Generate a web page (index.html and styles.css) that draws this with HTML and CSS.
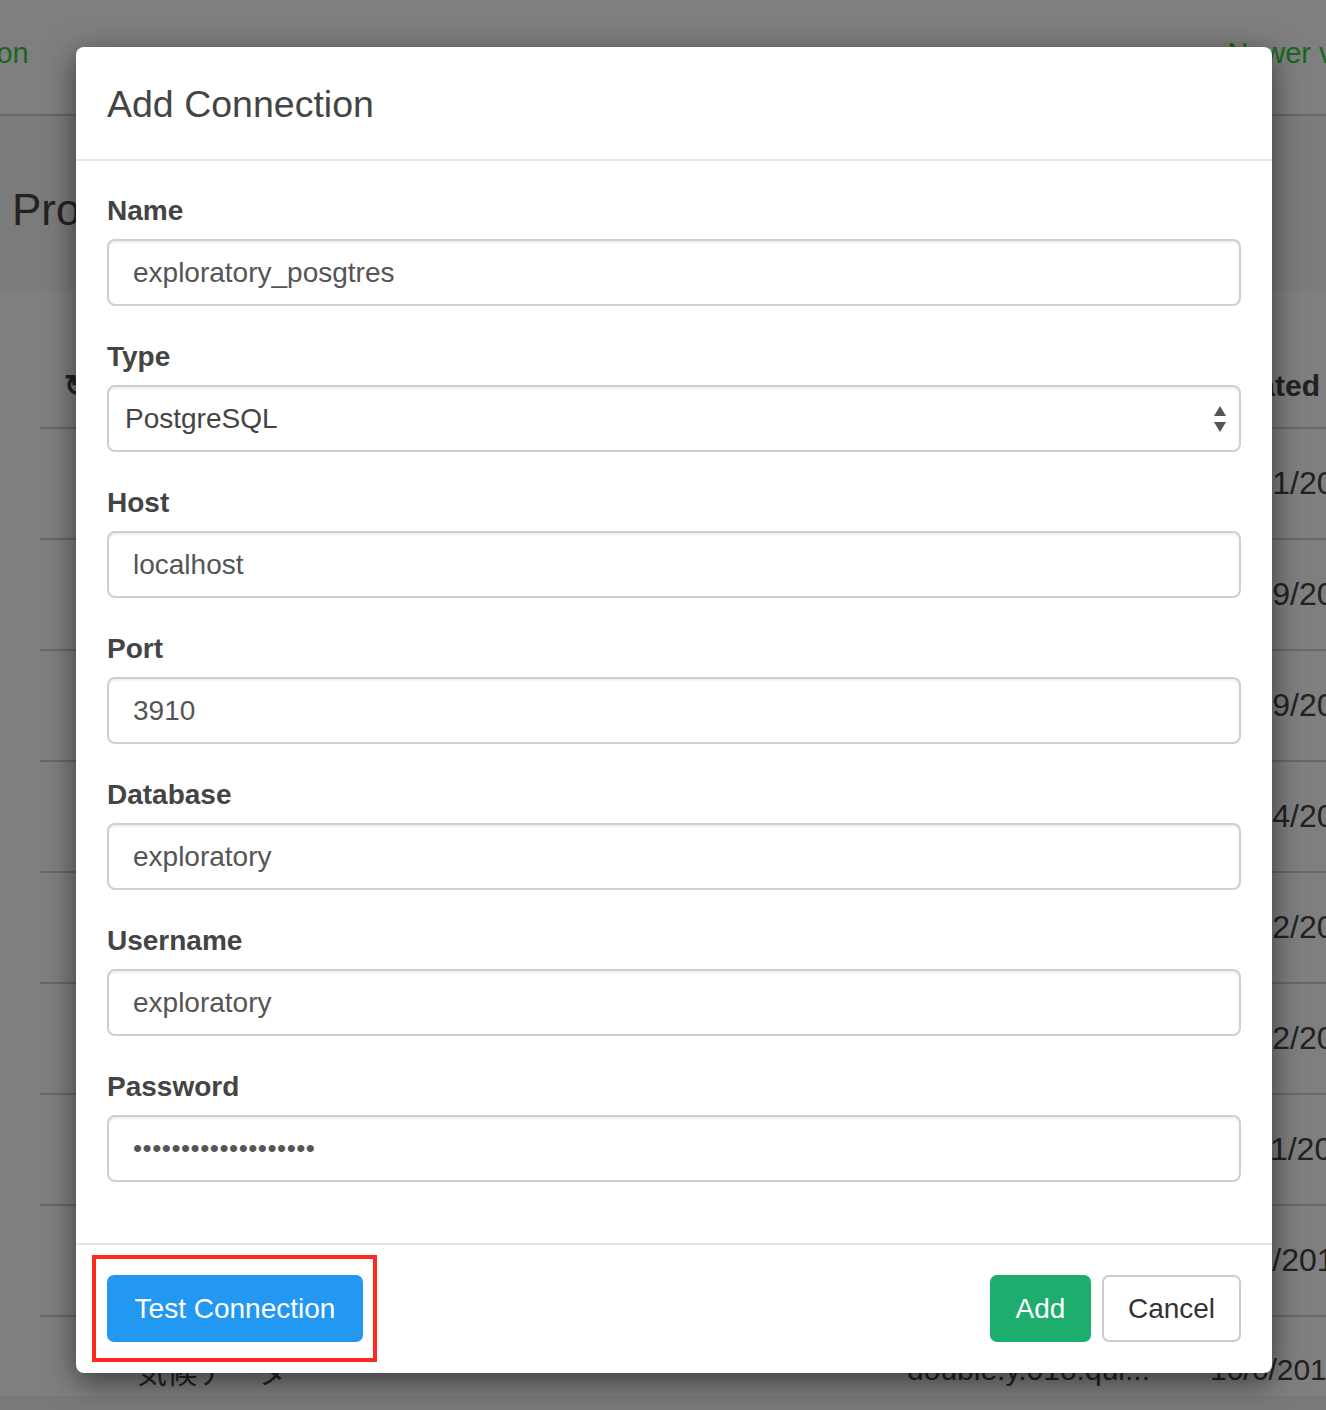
FILE: index.html
```html
<!DOCTYPE html>
<html>
<head>
<meta charset="utf-8">
<link rel="stylesheet" href="styles.css">
</head>
<body>
<div class="page">
  <header class="topnav">
    <span class="brand">Connection</span>
    <span class="newer">Newer version is available</span>
  </header>
  <section class="hero"><h1 class="hero-title">Projects</h1></section>
  <div class="list">
    <div class="row head"><span class="icon">&#x21BB;</span><span class="date">Updated</span></div>
    <div class="row"><span class="date">10/21/2016</span></div>
    <div class="row"><span class="date">10/19/2016</span></div>
    <div class="row"><span class="date">10/19/2016</span></div>
    <div class="row"><span class="date">10/14/2016</span></div>
    <div class="row"><span class="date">10/12/2016</span></div>
    <div class="row"><span class="date">10/12/2016</span></div>
    <div class="row"><span class="date">10/11/2016</span></div>
    <div class="row"><span class="date">10/7/2016</span></div>
    <div class="row last"><span class="name">気候データ</span><span class="file">double.y.01o.qui...</span><span class="date">10/6/2016</span></div>
  </div>
  <div class="pagefoot"></div>
</div>
<div class="backdrop"></div>
<div class="modal">
  <div class="modal-header"><h4 class="modal-title">Add Connection</h4></div>
  <div class="modal-body">
    <div class="group">
      <label class="label">Name</label>
      <input class="control" type="text" value="exploratory_posgtres">
    </div>
    <div class="group">
      <label class="label">Type</label>
      <div class="control select">
        <span>PostgreSQL</span>
        <svg class="arrows" width="14" height="26" viewBox="0 0 14 26"><path d="M7 0 L13 10 L1 10 Z" fill="#555"/><path d="M1 16 L13 16 L7 26 Z" fill="#555"/></svg>
      </div>
    </div>
    <div class="group">
      <label class="label">Host</label>
      <input class="control" type="text" value="localhost">
    </div>
    <div class="group">
      <label class="label">Port</label>
      <input class="control" type="text" value="3910">
    </div>
    <div class="group">
      <label class="label">Database</label>
      <input class="control" type="text" value="exploratory">
    </div>
    <div class="group">
      <label class="label">Username</label>
      <input class="control" type="text" value="exploratory">
    </div>
    <div class="group">
      <label class="label">Password</label>
      <input class="control pw" type="password" value="abcdefghijklmnopqrs">
    </div>
  </div>
  <div class="modal-footer">
    <span class="highlight"><button class="btn btn-blue">Test Connection</button></span>
    <span class="spacer"></span>
    <button class="btn btn-green">Add</button>
    <button class="btn btn-default">Cancel</button>
  </div>
</div>
</body>
</html>
```

FILE: styles.css
```css
html, body {
  margin: 0;
  padding: 0;
}
body {
  font-family: "Liberation Sans", Arial, sans-serif;
  width: 1326px;
  height: 1410px;
  overflow: hidden;
  background: #ffffff;
  position: relative;
}
.page {
  width: 1326px;
}
.topnav {
  height: 116px;
  border-bottom: 2px solid #cfcfcf;
  display: flex;
  justify-content: space-between;
  align-items: center;
  white-space: nowrap;
  overflow: hidden;
  font-size: 29px;
  color: #34d234;
  padding-bottom: 8px;
  box-sizing: border-box;
}
.brand {
  margin-left: -118px;
}
.newer {
  margin-right: -238px;
}
.hero {
  height: 174px;
  background: #f6f6f6;
  display: flex;
  align-items: center;
  padding-left: 12px;
}
.hero-title {
  margin: 0;
  font-weight: normal;
  font-size: 44px;
  color: #444;
  padding-top: 14px;
}
.list {
  padding-left: 40px;
}
.row {
  height: 109px;
  border-bottom: 2px solid #d0d0d0;
  display: flex;
  align-items: center;
  font-size: 32px;
  color: #444;
}
.row .date {
  margin-left: auto;
  width: 116px;
  white-space: nowrap;
}
.row.head {
  height: 139px;
  align-items: flex-end;
  padding-bottom: 24px;
  box-sizing: border-box;
  font-weight: bold;
  font-size: 30px;
}
.row.head .icon {
  margin-left: 24px;
  font-size: 30px;
}
.row.head .date {
  width: auto;
  margin-right: 6px;
}
.row.last {
  border-bottom: none;
  height: 79px;
  align-items: flex-start;
  padding-top: 38px;
  box-sizing: border-box;
  overflow: hidden;
  font-size: 30px;
}
.row .name {
  margin-left: 97px;
  font-family: "Noto Sans CJK JP", sans-serif;
  line-height: 1;
}
.row .file {
  margin-left: auto;
  margin-right: 60px;
  line-height: 1;
}
.row.last .date {
  margin-left: 0;
  line-height: 1;
}
.pagefoot {
  height: 40px;
  background: #f3f3f3;
}
.backdrop {
  position: absolute;
  inset: 0;
  background: rgba(0, 0, 0, 0.5);
}
.modal {
  position: absolute;
  left: 76px;
  top: 47px;
  width: 1196px;
  background: #fff;
  border-radius: 8px;
  box-shadow: 0 8px 30px rgba(0, 0, 0, 0.55);
  color: #333;
}
.modal-header {
  height: 114px;
  border-bottom: 2px solid #e5e5e5;
  display: flex;
  align-items: center;
  padding: 0 31px;
  box-sizing: border-box;
}
.modal-title {
  margin: 0;
  font-size: 37.5px;
  font-weight: normal;
  color: #444;
  padding-top: 2px;
}
.modal-body {
  padding: 34px 31px 61px;
}
.group {
  margin-bottom: 35px;
}
.group:last-child {
  margin-bottom: 0;
}
.label {
  display: block;
  font-size: 28px;
  line-height: 32px;
  font-weight: bold;
  color: #444;
  margin-bottom: 12px;
}
.control {
  display: flex;
  align-items: center;
  width: 100%;
  height: 67px;
  box-sizing: border-box;
  border: 2px solid #cfcfcf;
  border-radius: 8px;
  padding: 0 24px;
  font-family: "Liberation Sans", Arial, sans-serif;
  font-size: 28px;
  color: #555;
  background: #fff;
  box-shadow: inset 0 2px 2px rgba(0, 0, 0, 0.06);
  outline: none;
}
.pw {
  font-size: 26px;
  letter-spacing: 0.5px;
}
.select {
  padding: 0 12px 0 16px;
  justify-content: space-between;
  color: #444;
}
.arrows {
  display: block;
}
.modal-footer {
  border-top: 2px solid #e5e5e5;
  padding: 30px 31px 31px;
  display: flex;
  align-items: center;
  gap: 11px;
}
.spacer {
  flex: 1;
}
.highlight {
  display: inline-flex;
  border: 4px solid #ff2a1e;
  padding: 16px 10px 16px 11px;
  margin: -20px -14px -20px -15px;
}
.btn {
  height: 67px;
  border-radius: 7px;
  font-family: "Liberation Sans", Arial, sans-serif;
  font-size: 28px;
  padding: 0 24px;
  border: 2px solid transparent;
  cursor: pointer;
}
.btn-blue {
  width: 256px;
  background: #2398f3;
  color: #fff;
}
.btn-green {
  width: 101px;
  background: #1dad6f;
  color: #fff;
  padding: 0;
}
.btn-default {
  width: 139px;
  background: #fff;
  border-color: #cccccc;
  color: #333;
  padding: 0;
}
```
